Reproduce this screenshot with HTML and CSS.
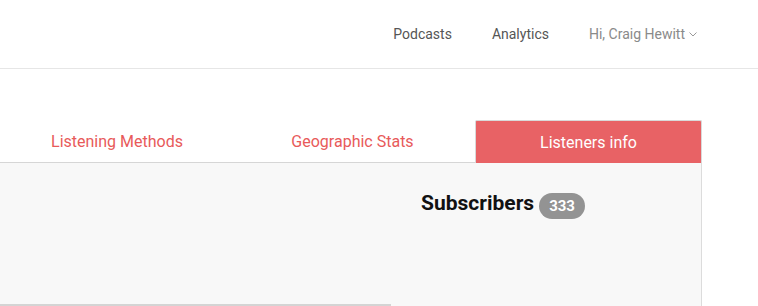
FILE: index.html
```html
<!DOCTYPE html>
<html lang="en">
<head>
    <meta charset="UTF-8">
    <meta name="viewport" content="width=device-width, initial-scale=1.0">
    <title>Listeners info</title>
    <link rel="stylesheet" href="styles.css">
</head>
<body>
    <header class="topbar">
        <nav class="main-nav">
            <a href="#" class="nav-link">Podcasts</a>
            <a href="#" class="nav-link">Analytics</a>
            <a href="#" class="nav-link user-menu">Hi, Craig Hewitt
                <svg class="caret" width="8" height="5" viewBox="0 0 8 5"><path d="M0.5 0.5 L4 4 L7.5 0.5" fill="none" stroke="#999" stroke-width="1"/></svg>
            </a>
        </nav>
    </header>

    <div class="stats">
        <ul class="tabs">
            <li class="tab tab-first"><a href="#">Listening Methods</a></li>
            <li class="tab tab-mid"><a href="#">Geographic Stats</a></li>
            <li class="tab active"><a href="#">Listeners info</a></li>
        </ul>
        <div class="tab-panel">
            <div class="panel-left">
                <div class="left-footer"></div>
            </div>
            <div class="panel-right">
                <h3 class="subscribers">Subscribers <span class="badge">333</span></h3>
            </div>
        </div>
    </div>
</body>
</html>
```

FILE: styles.css
```css
body {
    margin: 0;
    font-family: Roboto, "Liberation Sans", Arial, sans-serif;
    background: #fff;
    overflow: hidden;
}
a {
    text-decoration: none;
}
.topbar {
    height: 68px;
    border-bottom: 1px solid #e6e6e6;
    display: flex;
    justify-content: flex-end;
    align-items: center;
    padding-right: 61px;
}
.main-nav {
    display: flex;
    gap: 40px;
    align-items: center;
}
.nav-link {
    font-size: 14px;
    color: #555;
}
.user-menu {
    color: #8a8a8a;
    display: flex;
    align-items: center;
    gap: 4px;
}
.caret {
    margin-top: 1px;
}
.stats {
    width: 702px;
    margin-top: 51px;
}
.tabs {
    list-style: none;
    margin: 0;
    padding: 0;
    display: flex;
    height: 43px;
}
.tab {
    border-bottom: 1px solid #d6d6d6;
    display: flex;
    align-items: center;
    justify-content: center;
    font-size: 16px;
}
.tab a {
    color: #e85a5a;
}
.tab-first {
    width: 226px;
    padding-left: 4px;
}
.tab-mid {
    flex: 1;
}
.tab.active {
    width: 225px;
    background: #e86265;
    border: 1px solid #d9d9d9;
    border-bottom: none;
    border-radius: 2px 2px 0 0;
}
.tab.active a {
    color: #fff;
}
.tab-panel {
    display: flex;
    background: #f8f8f8;
    border-right: 1px solid #dcdcdc;
    height: 143px;
}
.panel-left {
    width: 391px;
    display: flex;
    flex-direction: column;
    justify-content: flex-end;
}
.left-footer {
    border-top: 2px solid #d4d4d4;
}
.panel-right {
    padding-left: 30px;
    padding-top: 24px;
}
.subscribers {
    margin: 0;
    font-size: 21px;
    font-weight: 700;
    color: #111;
    display: flex;
    align-items: center;
    gap: 5px;
}
.badge {
    background: #939393;
    color: #fff;
    font-size: 15px;
    font-weight: 700;
    height: 26px;
    line-height: 26px;
    padding: 0 10px;
    border-radius: 13px;
    margin-top: 6px;
}
```
